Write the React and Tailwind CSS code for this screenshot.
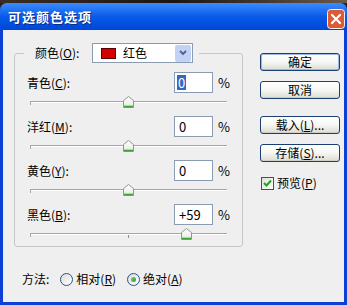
import React from "react"

const font = { fontFamily: '"Noto Sans CJK SC", "Liberation Sans", sans-serif' }

const Thumb = () => (
  <svg width="11" height="12" viewBox="0 0 11 12">
    <defs>
      <linearGradient id="tg" x1="0" y1="0" x2="0" y2="1">
        <stop offset="0" stopColor="#ffffff" />
        <stop offset="0.7" stopColor="#eef0ea" />
        <stop offset="1" stopColor="#b9e0b0" />
      </linearGradient>
    </defs>
    <polygon points="0.5,11.5 0.5,4.5 5.5,0.5 10.5,4.5 10.5,11.5" fill="url(#tg)" stroke="#8d9a8c" />
    <line x1="1" y1="10.5" x2="10" y2="10.5" stroke="#3fa33a" strokeWidth="1.5" />
  </svg>
)

const Slider = ({ value, height, tick }) => {
  // track is 196px wide, zero sits in the middle
  const left = 98 + (value / 100) * 98 - 5
  return (
    <div className="relative ml-[3px] w-[197px]" style={{ height }}>
      <div className="absolute left-0 right-0 top-[8px] h-[2px] border-t border-[#a7a7a7] border-b border-b-white" />
      <div className="absolute left-0 top-[8px] h-[4px] w-[1px] bg-[#a7a7a7]" />
      {tick && <div className="absolute left-[98px] top-[10px] h-[3px] w-[1px] bg-[#8f8f8f]" />}
      <div className="absolute top-[3px]" style={{ left }}>
        <Thumb />
      </div>
    </div>
  )
}

const Row = ({ name, hot, rest, value, selected, sliderValue, sliderHeight, tick }) => (
  <div>
    <div className="flex h-[21px] items-center">
      <div className="w-[147px] text-[12px] text-black">
        {name}(<span className="underline">{hot}</span>){rest}
      </div>
      <div className="flex h-[21px] w-[39px] items-center border border-[#8b9bb0] bg-white pl-[2px] text-[13px] text-black">
        {selected ? <span className="bg-[#316ac5] px-[1px] leading-[15px] text-white">{value}</span> : <span className="pl-[2px]">{value}</span>}
      </div>
      <div className="ml-[5px] text-[13px] text-black">%</div>
    </div>
    <Slider value={sliderValue} height={sliderHeight} tick={tick} />
  </div>
)

const XpButton = ({ children, primary }) => (
  <button
    className={
      "flex h-[18px] w-[80px] items-center justify-center rounded-[3px] border border-[#1c3f72] bg-gradient-to-b from-white via-[#f6f6f3] to-[#dcdcd4] text-[12px] leading-none text-black " +
      (primary ? "shadow-[inset_0_0_0_1px_#9fb7e6]" : "shadow-[inset_0_-1px_0_#cfcfc7]")
    }
  >
    {children}
  </button>
)

const Radio = ({ checked }) => (
  <div className="flex h-[13px] w-[13px] items-center justify-center rounded-full border border-[#2b5587] bg-gradient-to-br from-[#dcdcd7] to-white">
    {checked && <div className="h-[5px] w-[5px] rounded-full bg-gradient-to-br from-[#7bd270] to-[#2d9a2a]" />}
  </div>
)

export default function App() {
  return (
    <div className="flex h-[305px] w-[347px] flex-col overflow-hidden bg-[#2a2119]" style={font}>
      <div className="h-[3px] bg-gradient-to-r from-[#3b2d22] via-[#1c1612] to-[#6b5a4a]" />
      <div className="flex flex-1 flex-col rounded-t-[7px] bg-[#0b3fd6]">
        {/* title bar */}
        <div className="flex h-[27px] items-center justify-between rounded-t-[7px] bg-gradient-to-b from-[#3a8cff] via-[#0a5ae8] to-[#0046d8] pl-[8px] pr-[2px]">
          <span className="text-[13px] font-bold tracking-[1px] text-white [text-shadow:1px_1px_0_#0a2a8a]">可选颜色选项</span>
          <svg className="mt-[5px]" width="18" height="20" viewBox="0 0 18 20">
            <rect x="0.5" y="0.5" width="17" height="19" rx="3" fill="#de5a34" stroke="#f2f2f2" />
            <path d="M5 6 L13 14 M13 6 L5 14" stroke="white" strokeWidth="2.2" strokeLinecap="round" />
          </svg>
        </div>

        {/* body */}
        <div className="mx-[3px] mb-[3px] flex flex-1 bg-[#efefef] pl-[11px] pt-[13px]">
          <div className="flex w-[228px] flex-col">
            <fieldset className="rounded-[3px] border border-[#c6c6c6] px-[12px]">
              <legend className="-ml-[3px] pl-[11px] pr-[6px]">
                <div className="flex h-[20px] items-center">
                  <span className="w-[57px] text-[12px] text-black">
                    颜色(<span className="underline">O</span>):
                  </span>
                  <div className="flex h-[20px] w-[101px] items-center border border-[#8b9bb0] bg-white">
                    <div className="ml-[8px] h-[11px] w-[15px] border border-[#5a0000] bg-[#d40000]" />
                    <span className="ml-[7px] flex-1 text-[12px] text-black">红色</span>
                    <div className="mr-px flex h-[17px] w-[16px] items-center justify-center rounded-[2px] bg-[#c2d2f6]">
                      <svg width="8" height="6" viewBox="0 0 8 6">
                        <path d="M1 1 L4 4 L7 1" fill="none" stroke="#4d6185" strokeWidth="1.8" />
                      </svg>
                    </div>
                  </div>
                </div>
              </legend>
              <div className="mt-[9px]">
                <Row name="青色" hot="C" rest=":" value="0" selected sliderValue={0} sliderHeight={23} />
                <Row name="洋红" hot="M" rest=":" value="0" sliderValue={0} sliderHeight={23} />
                <Row name="黄色" hot="Y" rest=":" value="0" sliderValue={0} sliderHeight={23} />
                <Row name="黑色" hot="B" rest=":" value="+59" sliderValue={59} sliderHeight={21} tick />
              </div>
            </fieldset>

            <div className="ml-[8px] mt-[24px] flex h-[16px] items-center text-[12px] text-black">
              <span>方法:</span>
              <div className="ml-[11px]">
                <Radio />
              </div>
              <span className="ml-[3px]">
                相对(<span className="underline">R</span>)
              </span>
              <div className="ml-[11px]">
                <Radio checked />
              </div>
              <span className="ml-[3px]">
                绝对(<span className="underline">A</span>)
              </span>
            </div>
          </div>

          <div className="ml-[18px] flex flex-col pt-[10px]">
            <XpButton primary>确定</XpButton>
            <div className="mt-[10px]">
              <XpButton>取消</XpButton>
            </div>
            <div className="mt-[17px]">
              <XpButton>
                载入(<span className="underline">L</span>)...
              </XpButton>
            </div>
            <div className="mt-[10px]">
              <XpButton>
                存储(<span className="underline">S</span>)...
              </XpButton>
            </div>
            <div className="ml-px mt-[12px] flex items-center text-[12px] text-black">
              <div className="flex h-[13px] w-[13px] items-center justify-center border border-[#2b5587] bg-gradient-to-br from-[#e0e0da] to-white">
                <svg width="9" height="8" viewBox="0 0 9 8">
                  <path d="M1 4 L3.5 6.5 L8 1.5" fill="none" stroke="#21a121" strokeWidth="2" />
                </svg>
              </div>
              <span className="ml-[3px]">
                预览(<span className="underline">P</span>)
              </span>
            </div>
          </div>
        </div>
      </div>
    </div>
  )
}
